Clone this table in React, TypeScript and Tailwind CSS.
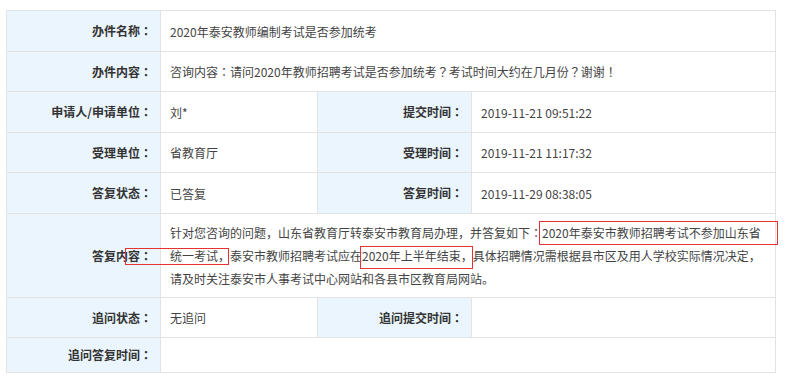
import React from 'react';

// YaHei-style centred ： ？ ！ come from the JP cut of Noto
function Txt({ s }: { s: string }) {
  return (
    <>
      {s.split(/([：？！])/).map((p, i) =>
        /[：？！]/.test(p) ? (
          <span key={i} className="font-['Noto_Sans_CJK_JP',sans-serif]">{p}</span>
        ) : (
          p
        )
      )}
    </>
  );
}

function Label({ text, h }: { text: string; h: string }) {
  return (
    <div className={`${h} flex items-center justify-end pr-[8px] bg-[#ebf5fe] border-r border-b border-[#e3e3e3] text-[12px] font-bold text-[#333]`}>
      <Txt s={text} />
    </div>
  );
}

function Value({ text, h, span }: { text?: string; h: string; span?: boolean }) {
  return (
    <div className={`${h} ${span ? 'col-span-3' : ''} flex items-center pl-[9px] pr-[10px] bg-white border-r border-b border-[#e3e3e3] text-[12px] text-[#444]`}>
      {text && <p className="leading-[23px]"><Txt s={text} /></p>}
    </div>
  );
}

const answer =
  '针对您咨询的问题，山东省教育厅转泰安市教育局办理，并答复如下：2020年泰安市教师招聘考试不参加山东省统一考试，泰安市教师招聘考试应在2020年上半年结束，具体招聘情况需根据县市区及用人学校实际情况决定，请及时关注泰安市人事考试中心网站和各县市区教育局网站。';

export default function App() {
  return (
    <div className="relative w-[795px] h-[382px] bg-white overflow-hidden font-['Noto_Sans_CJK_SC',sans-serif]">
      <div className="ml-[6px] pt-[10px]">
        <div className="grid grid-cols-[154px_157px_154px_304px] w-[770px] border-t border-l border-[#e3e3e3]">
          <Label h="h-[41px]" text="办件名称：" />
          <Value h="h-[41px]" span text="2020年泰安教师编制考试是否参加统考" />

          <Label h="h-[40px]" text="办件内容：" />
          <Value h="h-[40px]" span text="咨询内容：请问2020年教师招聘考试是否参加统考？考试时间大约在几月份？谢谢！" />

          <Label h="h-[41px]" text="申请人/申请单位：" />
          <Value h="h-[41px]" text="刘*" />
          <Label h="h-[41px]" text="提交时间：" />
          <Value h="h-[41px]" text="2019-11-21 09:51:22" />

          <Label h="h-[40px]" text="受理单位：" />
          <Value h="h-[40px]" text="省教育厅" />
          <Label h="h-[40px]" text="受理时间：" />
          <Value h="h-[40px]" text="2019-11-21 11:17:32" />

          <Label h="h-[41px]" text="答复状态：" />
          <Value h="h-[41px]" text="已答复" />
          <Label h="h-[41px]" text="答复时间：" />
          <Value h="h-[41px]" text="2019-11-29 08:38:05" />

          <Label h="h-[84px]" text="答复内容：" />
          <Value h="h-[84px]" span text={answer} />

          <Label h="h-[40px]" text="追问状态：" />
          <Value h="h-[40px]" text="无追问" />
          <Label h="h-[40px]" text="追问提交时间：" />
          <Value h="h-[40px]" />

          <Label h="h-[35px]" text="追问答复时间：" />
          <Value h="h-[35px]" span />
        </div>
      </div>

      {/* red annotation boxes */}
      <div className="absolute left-[539px] top-[221px] w-[239px] h-[24px] border border-[#e53333]" />
      <div className="absolute left-[125px] top-[248px] w-[104px] h-[17px] border border-[#e53333]" />
      <div className="absolute left-[360px] top-[246px] w-[113px] h-[23px] border border-[#e53333]" />
    </div>
  );
}
